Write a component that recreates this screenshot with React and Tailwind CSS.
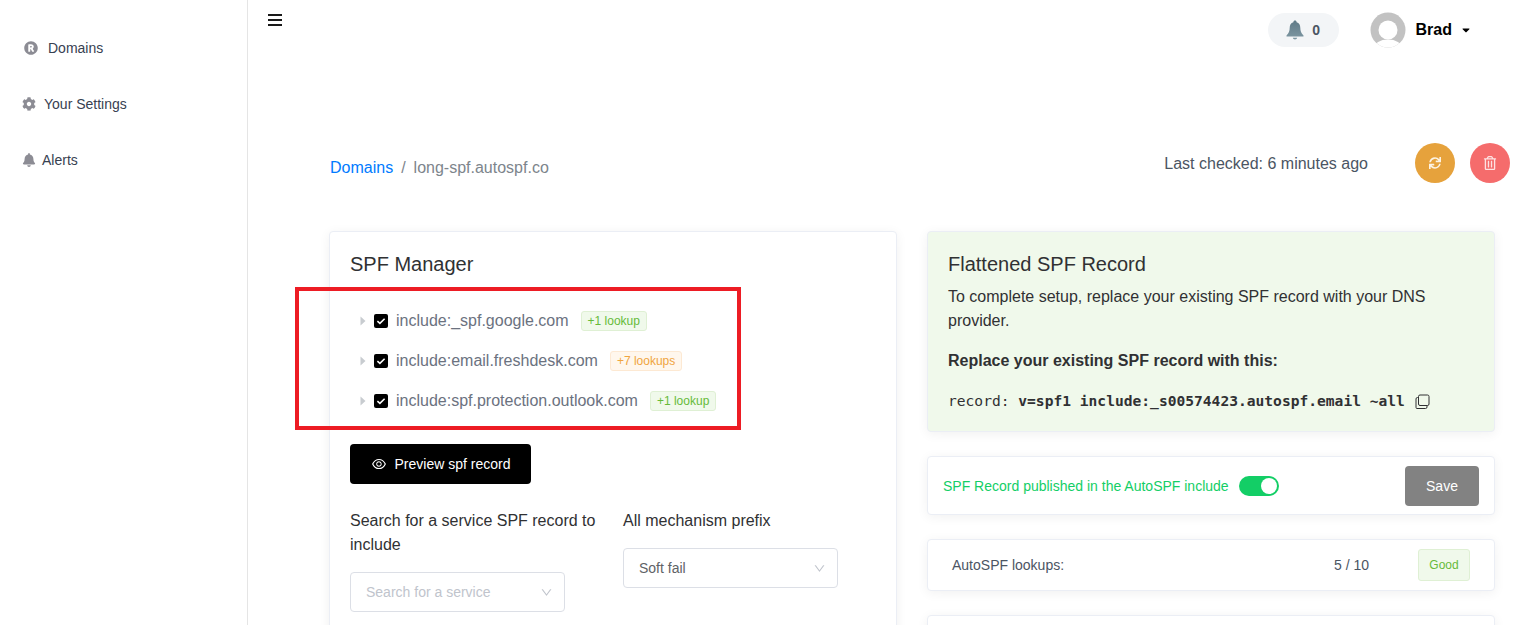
import { FaBell, FaCog, FaRegistered, FaCaretDown, FaSync, FaRegTrashAlt } from 'react-icons/fa';
import { AiOutlineEye, AiOutlineDown } from 'react-icons/ai';

function NavItem({ icon, label, gap }) {
  return (
    <a className={`flex items-center h-14 pl-[22px] text-sm text-[#374151] ${gap}`}>
      <span className="text-[#8c8c94] text-sm">{icon}</span>
      {label}
    </a>
  );
}

function Include({ name, badge, warn }) {
  return (
    <div className="flex items-center h-10 pl-[10px]">
      <svg viewBox="0 0 6 10" className="w-[6px] h-[10px] mr-[8px]" fill="#c8ccd0">
        <path d="M0.5 0.5 5.5 5 0.5 9.5Z" />
      </svg>
      <span className="w-[14px] h-[14px] rounded-[2px] bg-black flex items-center justify-center mr-2">
        <svg viewBox="0 0 14 14" className="w-[14px] h-[14px]" fill="none" stroke="#fff" strokeWidth="1.6">
          <path d="M3.4 7.2 5.9 9.4 10.6 4.8" />
        </svg>
      </span>
      <span className="text-base text-[#6b7280] mr-3">{name}</span>
      <span
        className={`text-xs h-5 leading-[19px] px-[6px] rounded-[3px] border ${
          warn ? 'text-[#f0a540] bg-[#fff7ed] border-[#fde9d3]' : 'text-[#66bb3a] bg-[#f0f9eb] border-[#dff0d4]'
        }`}
      >
        {badge}
      </span>
    </div>
  );
}

function SelectBox({ text, muted }) {
  return (
    <div className="w-[215px] h-10 border border-[#dcdfe6] rounded-[4px] flex items-center justify-between pl-[15px] pr-[11px] bg-white">
      <span className={`text-sm ${muted ? 'text-[#c0c4cc]' : 'text-[#606266]'}`}>{text}</span>
      <AiOutlineDown className="text-[#c0c4cc] text-[13px]" />
    </div>
  );
}

const card = 'rounded-[4px] border border-[#ebeef5] shadow-[0_2px_12px_0_rgba(0,0,0,0.06)]';

export default function App() {
  return (
    <div className="h-screen overflow-hidden flex bg-white font-['Liberation_Sans',Arial,sans-serif]">
      <aside className="w-[248px] shrink-0 border-r border-[#e5e5e5] pt-5">
        <NavItem icon={<FaRegistered />} label="Domains" gap="gap-[10px] pl-[24px]" />
        <NavItem icon={<FaCog />} label="Your Settings" gap="gap-2" />
        <NavItem icon={<FaBell />} label="Alerts" gap="gap-[6px]" />
      </aside>

      <main className="flex-1 min-w-0">
        <header className="h-[60px] flex justify-between pl-5 pr-[45px]">
          <div className="flex flex-col gap-[3px] w-[14px] pt-[14px]">
            <span className="h-[2px] bg-[#1a1a1a]" />
            <span className="h-[2px] bg-[#1a1a1a]" />
            <span className="h-[2px] bg-[#1a1a1a]" />
          </div>
          <div className="flex items-start pt-3">
            <div className="w-[71px] h-[34px] mt-[1px] rounded-full bg-[#f3f5f7] flex items-center justify-center gap-[8px] mr-[31px]">
              <svg viewBox="0 0 18 20" className="w-[18px] h-5">
                <defs>
                  <linearGradient id="bell" x1="0" y1="0" x2="0" y2="1">
                    <stop offset="0" stopColor="#5f7a87" />
                    <stop offset="1" stopColor="#7f98a3" />
                  </linearGradient>
                </defs>
                <path
                  fill="url(#bell)"
                  d="M9 0.5c1 0 1.6.7 1.6 1.7 2.6.7 3.7 2.9 3.7 5.6 0 3.4.9 5.4 3.2 7.7v1H.5v-1c2.3-2.3 3.2-4.3 3.2-7.7 0-2.7 1.1-4.9 3.7-5.6C7.4 1.2 8 .5 9 .5ZM6.8 17.8h4.4c-.3 1-1.1 1.6-2.2 1.6s-1.9-.6-2.2-1.6Z"
                />
              </svg>
              <span className="text-sm font-bold text-[#4b5563]">0</span>
            </div>
            <svg viewBox="0 0 36 36" className="w-9 h-9 mr-[10px]">
              <defs>
                <clipPath id="av"><circle cx="18" cy="18" r="17.5" /></clipPath>
              </defs>
              <circle cx="18" cy="18" r="17.5" fill="#c2c2c2" />
              <g clipPath="url(#av)" fill="#fff">
                <circle cx="18" cy="18" r="9.5" />
                <ellipse cx="18" cy="36" rx="14" ry="8.5" />
              </g>
            </svg>
            <span className="text-base font-bold text-black leading-9">Brad</span>
            <FaCaretDown className="text-black text-xs ml-[8px] mt-3" />
          </div>
        </header>

        <div className="pl-[81px] pr-[22px]">
          <div className="h-[171px] flex items-start justify-between pt-[83px]">
            <div className="text-base ml-[1px] mt-[13px] leading-6 text-[#7d858c]">
              <a className="text-[#007bff]">Domains</a>
              <span className="px-2">/</span>
              long-spf.autospf.co
            </div>
            <div className="flex items-center gap-[15px] mr-[-15px]">
              <span className="text-base text-[#4b5563] mr-[32px] pt-[2px]">Last checked: 6 minutes ago</span>
              <span className="w-10 h-10 rounded-full bg-[#e6a23c] flex items-center justify-center text-[#fdf3e3] text-xs">
                <FaSync />
              </span>
              <span className="w-10 h-10 rounded-full bg-[#f56c6c] flex items-center justify-center text-[#fde2e2] text-sm">
                <FaRegTrashAlt />
              </span>
            </div>
          </div>

          <div className="flex gap-[30px] items-start">
            <section className={`${card} w-[568px] shrink-0 bg-white px-5 pt-5 pb-10`}>
              <h2 className="text-xl leading-6 text-[#303133]">SPF Manager</h2>
              <div className="mt-[25px]">
                <Include name="include:_spf.google.com" badge="+1 lookup" />
                <Include name="include:email.freshdesk.com" badge="+7 lookups" warn />
                <Include name="include:spf.protection.outlook.com" badge="+1 lookup" />
              </div>
              <button className="mt-[23px] w-[181px] h-10 rounded-[4px] bg-black text-white text-sm flex items-center justify-center gap-[8px]">
                <AiOutlineEye className="text-base" />
                Preview spf record
              </button>
              <div className="mt-[25px] flex gap-[20px]">
                <div className="w-[253px]">
                  <label className="block text-base leading-6 text-[#303133] mb-[15px]">Search for a service SPF record to include</label>
                  <SelectBox text="Search for a service" muted />
                </div>
                <div>
                  <label className="block text-base leading-6 text-[#303133] mb-[15px]">All mechanism prefix</label>
                  <SelectBox text="Soft fail" />
                </div>
              </div>
            </section>

            <div className="flex-1 min-w-0 flex flex-col">
              <section className={`${card} bg-[#f0f9eb] px-5 pt-5 pb-5 h-[201px]`}>
                <h2 className="text-xl leading-6 text-[#303133]">Flattened SPF Record</h2>
                <p className="text-base leading-6 text-[#303133] mt-[9px]">
                  To complete setup, replace your existing SPF record with your DNS provider.
                </p>
                <p className="text-base leading-6 font-bold text-[#303133] mt-[16px]">Replace your existing SPF record with this:</p>
                <div className="mt-[16px] flex items-center text-[14.6px] leading-6 whitespace-pre font-['DejaVu_Sans_Mono','Liberation_Mono',monospace] text-[#303133]">
                  <span>record: </span>
                  <span className="font-bold">v=spf1 include:_s00574423.autospf.email ~all</span>
                  <svg viewBox="0 0 15 15" className="w-[15px] h-[15px] ml-[10px]" fill="none" stroke="#303133" strokeWidth="1">
                    <rect x="3.5" y="1" width="10.5" height="10.5" rx="1.5" />
                    <path d="M3.5 3.5H2.5A1.5 1.5 0 0 0 1 5v8.5A1 1 0 0 0 2 14.5h8.5a1.5 1.5 0 0 0 1.5-1.5v-1.5" />
                  </svg>
                </div>
              </section>

              <section className={`${card} bg-white mt-[24px] h-[59px] flex items-center justify-between pl-[15px] pr-[15px]`}>
                <div className="flex items-center gap-[10px]">
                  <span className="text-sm text-[#13ce66]">SPF Record published in the AutoSPF include</span>
                  <span className="w-10 h-5 rounded-full bg-[#13ce66] flex items-center justify-end pr-[2px]">
                    <span className="w-4 h-4 rounded-full bg-white" />
                  </span>
                </div>
                <button className="w-[74px] h-10 rounded-[4px] bg-[#828282] text-white text-sm">Save</button>
              </section>

              <section className={`${card} bg-white mt-[24px] h-[52px] flex items-center pl-[24px] pr-[24px]`}>
                <span className="text-sm text-[#4b5563] flex-1">AutoSPF lookups:</span>
                <span className="text-sm text-[#4b5563] mr-[49px]">5 / 10</span>
                <span className="w-[52px] h-8 rounded-[3px] bg-[#f0f9eb] border border-[#dff0d4] text-xs text-[#66bb3a] flex items-center justify-center">Good</span>
              </section>

              <section className={`${card} bg-white mt-[24px] h-[60px]`} />
            </div>
          </div>
        </div>
      </main>

      {/* annotation drawn over the screenshot */}
      <div className="absolute left-[295px] top-[287px] w-[446px] h-[143px] border-4 border-[#ed1c24] pointer-events-none" />
    </div>
  );
}
